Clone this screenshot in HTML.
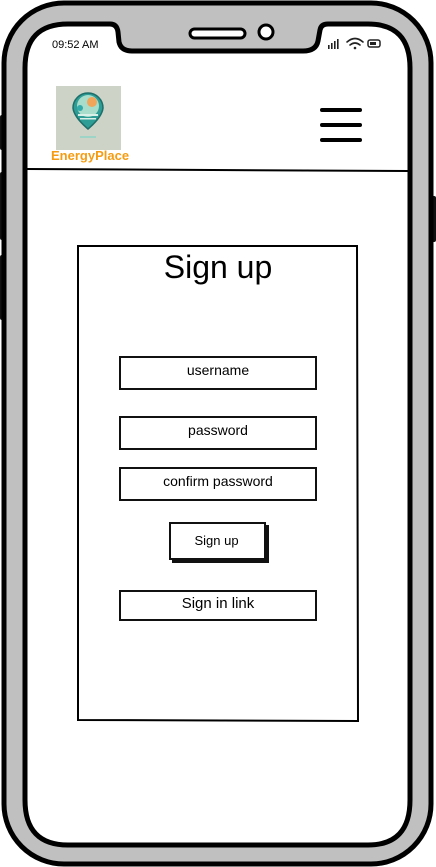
<!DOCTYPE html>
<html><head><meta charset="utf-8"><style>
*{margin:0;padding:0;box-sizing:border-box}
body{width:436px;height:867px;background:#fff;position:relative;overflow:hidden;font-family:"Liberation Sans",sans-serif}
svg{position:absolute;left:0;top:0}
.t{position:absolute;color:#000;text-align:center}
.box{position:absolute;border:2px solid #111;background:#fff}
</style></head><body>
<svg width="436" height="867" viewBox="0 0 436 867">
  <rect x="0" y="115" width="7" height="35" rx="2" fill="#111"/>
  <rect x="0" y="172" width="7" height="68" rx="2" fill="#111"/>
  <rect x="0" y="255" width="7" height="65" rx="2" fill="#111"/>
  <rect x="429" y="196" width="7" height="46" rx="2" fill="#111"/>
  <rect x="4" y="3" width="427" height="861" rx="60" fill="#c0c0c0" stroke="#000" stroke-width="5"/>
  <path d="M68,24 L110,24 Q117,24 118,32 L119,42 Q121,51 132,51 L303,51 Q316,51 318,41 L320,30 Q321,24 328,24 L368,24 Q410,24 410,68 L410,800 Q410,845 368,845 L68,845 Q25,845 25,800 L25,68 Q25,24 68,24 Z" fill="#fff" stroke="#000" stroke-width="5"/>
  <rect x="190" y="29" width="55" height="9" rx="4.5" fill="#fff" stroke="#000" stroke-width="3"/>
  <ellipse cx="266" cy="32" rx="7" ry="7" fill="#fff" stroke="#000" stroke-width="3"/>
  <g fill="#222">
    <rect x="328" y="45" width="1.6" height="4"/>
    <rect x="331" y="43" width="1.6" height="6"/>
    <rect x="334" y="41" width="1.6" height="8"/>
    <rect x="337" y="39" width="1.6" height="10"/>
  </g>
  <g fill="none" stroke="#222" stroke-width="1.6" stroke-linecap="round">
    <path d="M347,42 Q355,35 363,42"/>
    <path d="M350,45 Q355,41 360,45"/>
  </g>
  <circle cx="355" cy="48" r="1.3" fill="#222"/>
  <rect x="368" y="40" width="12" height="7" rx="2" fill="none" stroke="#222" stroke-width="1.5"/>
  <rect x="370" y="42" width="6" height="3" fill="#222"/>
  <line x1="27" y1="169" x2="408" y2="171" stroke="#000" stroke-width="2"/>
  <g stroke="#000" stroke-width="4" stroke-linecap="round">
    <line x1="322" y1="110" x2="360" y2="110"/>
    <line x1="322" y1="125" x2="360" y2="125"/>
    <line x1="322" y1="140" x2="360" y2="140"/>
  </g>
  <rect x="56" y="86" width="65" height="64" fill="#cdd3c6"/>
  <path d="M88,129 Q74,117 73,108 A15,15 0 1 1 103,108 Q102,117 88,129 Z" fill="#2e9d96" stroke="#1e6e6a" stroke-width="1.5"/>
  <circle cx="88" cy="106" r="11" fill="#a8dccb"/>
  <circle cx="92" cy="102" r="5" fill="#f0a55a"/>
  <rect x="78" y="114" width="20" height="2" fill="#d9f0e8"/>
  <rect x="80" y="118" width="16" height="1.5" fill="#d9f0e8"/>
  <circle cx="80" cy="108" r="3" fill="#3aa"/>
  <line x1="80" y1="137" x2="96" y2="137" stroke="#8fd3c8" stroke-width="1.5"/>
  <path d="M78,246 L357,246 L358,721 L78,720 Z" fill="#fff" stroke="#000" stroke-width="2"/>
</svg>
<div class="t" style="left:52px;top:39px;font-size:11px;">09:52 AM</div>
<div class="t" style="left:51px;top:148px;font-size:13px;font-weight:bold;color:#f59c12;">EnergyPlace</div>
<div class="t" style="left:78px;width:280px;top:249px;font-size:32px;">Sign up</div>
<div class="box" style="left:119px;top:356px;width:198px;height:34px;"></div>
<div class="t" style="left:119px;width:198px;top:362px;font-size:14px;">username</div>
<div class="box" style="left:119px;top:416px;width:198px;height:34px;"></div>
<div class="t" style="left:119px;width:198px;top:422px;font-size:14px;">password</div>
<div class="box" style="left:119px;top:467px;width:198px;height:34px;"></div>
<div class="t" style="left:119px;width:198px;top:473px;font-size:14px;">confirm password</div>
<div class="box" style="left:169px;top:522px;width:97px;height:38px;box-shadow:3px 3px 0 #111;"></div>
<div class="t" style="left:169px;width:95px;top:533px;font-size:13px;">Sign up</div>
<div class="box" style="left:119px;top:590px;width:198px;height:31px;"></div>
<div class="t" style="left:119px;width:198px;top:595px;font-size:15px;">Sign in link</div>
</body></html>
